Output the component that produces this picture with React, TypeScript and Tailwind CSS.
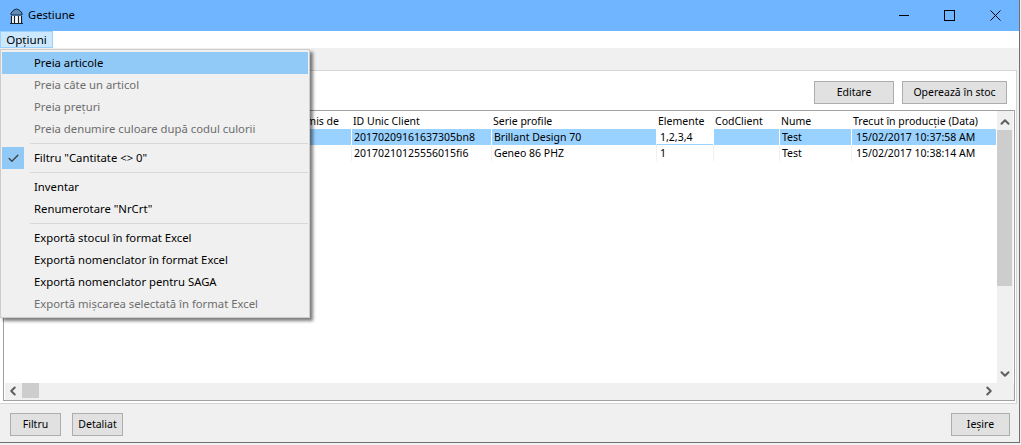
import React from "react";
import { ChevronUp, ChevronDown, ChevronLeft, ChevronRight, Check } from "lucide-react";

function Item({ t, dis, hi }: { t: string; dis?: boolean; hi?: boolean }) {
  return (
    <div className={`h-[22px] flex items-center pl-[32px] text-[11.3px] whitespace-nowrap ${dis ? "text-[#6d6d6d]" : "text-black"} ${hi ? "bg-[#91c9f7]" : ""}`}>
      {t}
    </div>
  );
}
function Sep() {
  return <div className="h-[7px] flex items-center pl-[28px]"><div className="h-px w-full bg-[#d7d7d7]" /></div>;
}
function Btn({ t, w }: { t: string; w: string }) {
  return (
    <div className={`${w} h-[23px] flex items-center justify-center bg-[#e1e1e1] border border-[#adadad] text-[10.5px] text-black`}>{t}</div>
  );
}
const cols = [
  { w: "w-[140px]", h: "ID Unic Client", a: "20170209161637305bn8", b: "20170210125556015fi6", p: "pl-[2px]" },
  { w: "w-[165px]", h: "Serie profile", a: "Brillant Design 70", b: "Geneo 86 PHZ", p: "pl-[2px]" },
  { w: "w-[57px]", h: "Elemente", a: "1,2,3,4", b: "1", p: "pl-[3px]" },
  { w: "w-[66px]", h: "CodClient", a: "", b: "", p: "pl-[2px]" },
  { w: "w-[72px]", h: "Nume", a: "Test", b: "Test", p: "pl-[2px]" },
  { w: "w-[145px]", h: "Trecut în producție (Data)", a: "15/02/2017 10:37:58 AM", b: "15/02/2017 10:38:14 AM", p: "pl-[4px]" },
];

export default function App() {
  return (
    <div className="relative w-[1021px] h-[445px] overflow-hidden bg-[#f0f0f0] [font-family:'Noto_Sans',sans-serif]">
      <div className="w-[1020px] h-[443px] border-r border-b border-[#707070] flex flex-col">
        <div className="h-[31px] shrink-0 bg-[#70b5ff] flex items-center pl-[10px]">
          <svg width="13" height="16" viewBox="0 0 13 16" className="mr-[5px]">
            <path d="M1 7V5Q6.5 -3 12 5V7Z" fill="#5f8db8" stroke="#14263a" strokeWidth="1" />
            <rect x="1" y="8" width="11" height="7" fill="#fff" />
            <path d="M1.5 8v7M4.5 8v7M8.5 8v7M11.5 8v7" stroke="#14202c" strokeWidth="1.2" />
            <path d="M0 15.5h13" stroke="#14202c" strokeWidth="1" />
          </svg>
          <span className="text-[11.2px] text-black">Gestiune</span>
          <div className="ml-auto flex items-center">
            <div className="w-[10px] h-px bg-black mr-[35px]" />
            <div className="w-[11px] h-[11px] border border-black mr-[35px]" />
            <svg width="11" height="11" viewBox="0 0 11 11" className="mr-[18px]"><path d="M0.5 0.5l10 10M10.5 0.5l-10 10" stroke="#000" strokeWidth="1" /></svg>
          </div>
        </div>
        <div className="h-[17px] shrink-0 bg-white flex">
          <div className="w-[53px] bg-[#cce8ff] border border-[#99d1ff] flex items-center justify-center text-[11.6px] text-black">Opțiuni</div>
        </div>
        <div className="h-[22px] shrink-0" />
        <div className="w-[1017px] h-[334px] shrink-0 flex flex-col bg-white border-t border-b border-r border-[#d4d4d4] pl-[3px] pr-[1px] pb-[2px]">
          <div className="h-[39px] shrink-0 flex items-start justify-end gap-[8px] pt-[10px] pr-[8px]">
            <Btn t="Editare" w="w-[80px]" />
            <Btn t="Operează în stoc" w="w-[105px]" />
          </div>
          <div className="h-[291px] shrink-0 flex flex-col border border-[#a0a0a0]">
            <div className="flex-1 flex min-h-0">
              <div className="w-[347px] flex flex-col shrink-0">
                <div className="h-[18px] pt-[3px] flex items-center justify-end pr-[12px] text-[10.5px] text-black">Emis de</div>
                <div className="h-[16px] bg-[#99d1ff]" />
              </div>
              {cols.map((c) => (
                <div key={c.h} className={`${c.w} shrink-0 flex flex-col text-[10.5px] text-black`}>
                  <div className="h-[18px] pt-[3px] flex items-center pl-[2px] whitespace-nowrap overflow-hidden">{c.h}</div>
                  <div className={`h-[16px] pt-[2px] flex items-center ${c.p} border-l border-white whitespace-nowrap ${c.h === "Elemente" ? "bg-white border-b border-b-[#99d1ff]" : "bg-[#99d1ff]"}`}>{c.a}</div>
                  <div className={`h-[16px] pt-[2px] flex items-center ${c.p} border-l border-[#f0f0f0] whitespace-nowrap`}>{c.b}</div>
                </div>
              ))}
              <div className="w-px shrink-0" />
              <div className="w-[16px] bg-[#f0f0f0] flex flex-col items-center">
                <ChevronUp size={14} strokeWidth={3.5} className="text-[#606060] mt-[4px] mb-[1px] shrink-0" />
                <div className="w-[15px] h-[156px] bg-[#cdcdcd] self-start" />
                <div className="flex-1" />
                <ChevronDown size={14} strokeWidth={3.5} className="text-[#606060] mb-[2px] shrink-0" />
              </div>
            </div>
            <div className="h-[17px] shrink-0 bg-[#f0f0f0] flex items-start ml-px">
              <ChevronLeft size={14} strokeWidth={3.5} className="text-[#606060] ml-[1px] mt-[1px]" />
              <div className="w-[17px] h-[15px] bg-[#cdcdcd] ml-[2px]" />
              <div className="flex-1" />
              <ChevronRight size={14} strokeWidth={3.5} className="text-[#606060] mr-[18px] mt-[1px]" />
            </div>
          </div>
        </div>
        <div className="flex-1 flex items-start pt-[9px] pl-[10px] pr-[9px] gap-[11px]">
          <Btn t="Filtru" w="w-[51px]" />
          <Btn t="Detaliat" w="w-[51px]" />
          <div className="flex-1" />
          <Btn t="Ieșire" w="w-[59px]" />
        </div>
      </div>

      <div className="absolute left-0 top-[49px] w-[310px] h-[269px] bg-[#f0f0f0] border border-[#cccccc] py-[2px] pl-[1px] pr-[1px] shadow-[3px_3px_3px_rgba(0,0,0,0.5)]">
        <Item t="Preia articole" hi />
        <Item t="Preia câte un articol" dis />
        <Item t="Preia prețuri" dis />
        <Item t="Preia denumire culoare după codul culorii" dis />
        <Sep />
        <div className="relative">
          <div className="absolute left-0 top-0 w-[22px] h-[22px] bg-[#90c8f6] flex items-center justify-center">
            <Check size={13} strokeWidth={2.5} className="text-[#404040]" />
          </div>
          <Item t={'Filtru "Cantitate <> 0"'} />
        </div>
        <Sep />
        <Item t="Inventar" />
        <Item t={'Renumerotare "NrCrt"'} />
        <Sep />
        <Item t="Exportă stocul în format Excel" />
        <Item t="Exportă nomenclator în format Excel" />
        <Item t="Exportă nomenclator pentru SAGA" />
        <Item t="Exportă mișcarea selectată în format Excel" dis />
      </div>
    </div>
  );
}
